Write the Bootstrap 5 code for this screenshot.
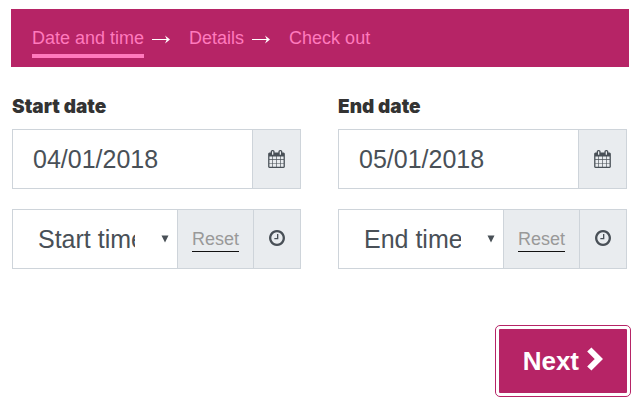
<!DOCTYPE html>
<html lang="en">
<head>
<meta charset="utf-8">
<meta name="viewport" content="width=device-width, initial-scale=1">
<title>Date and time</title>
<link href="https://cdn.jsdelivr.net/npm/bootstrap@5.3.0/dist/css/bootstrap.min.css" rel="stylesheet">
<style>
:root { --brand: #b62466; --brand-light: #ff7abd; --line: #ced4da; --ink: #495057; }
body { font-family: "Liberation Sans", Arial, sans-serif; font-size: 18px; background: #fff; }
.page { padding: 9px 13px 8px 11px; }
.steps { background: var(--brand); padding: 14px 21px 9px; }
.step-link { color: var(--brand-light); line-height: 29px; padding-top: 1px; padding-bottom: 1px; border-bottom: 4px solid transparent; }
.step-link:hover { color: #fff; }
.step-link.active { border-bottom-color: var(--brand-light); }
.step-arrow { color: #fff; margin: 12px 19px 0 8px; }
.booking { padding: 27px 2px 0 1px; }
.date-columns { --bs-gutter-x: 37px; }
.field-label { font-family: Inter, sans-serif; font-weight: 900; font-size: 19px; line-height: 26px; color: #333; margin-bottom: 9px; }
.field { height: 60px; }
.field + .field { margin-top: 20px; }
.field .form-control, .field .form-select, .field .input-group-text { border-color: var(--line); border-radius: 0; color: var(--ink); }
.field .form-control { font-size: 25px; padding: 2px 20px 0; }
.field .form-select { font-size: 25px; padding: 2px 42px 0 25px; background-image: url("data:image/svg+xml,%3Csvg xmlns='http://www.w3.org/2000/svg' viewBox='0 0 8 8'%3E%3Cpath fill='%23495057' d='M.5 .5h7L4 7.5z'/%3E%3C/svg%3E"); background-size: 8px 8px; background-position: right 8px center; }
.field .input-group-text { background: #e9ecef; padding: 0 14px; font-size: 18px; }
.field .icon-cell { width: 49px; padding: 0; justify-content: center; }
.field .time-cell { width: 48px; padding-bottom: 2px; }
.reset-btn { color: #999; background: none; border: 0; border-bottom: 1px solid #111; padding: 0; line-height: 24px; }
.next-btn { --bs-btn-color: #fff; --bs-btn-bg: var(--brand); --bs-btn-hover-color: #fff; --bs-btn-hover-bg: #9d1c56; --bs-btn-border-width: 0; font-size: 26px; height: 64px; padding: 0 24px; border-radius: 1px; margin-top: 60px; outline: 1px solid var(--brand); outline-offset: 3px; }
.next-btn svg { margin-bottom: 4px; }
</style>
<script src="https://cdn.jsdelivr.net/npm/bootstrap@5.3.0/dist/js/bootstrap.bundle.min.js" defer></script>
</head>
<body>
<svg class="d-none" aria-hidden="true">
  <symbol id="arrow" viewBox="0 0 18 9"><path d="M0 4h16v1H0zM13 .5l5 4-5 4 1.800-4z"/></symbol>
  <symbol id="calendar" viewBox="0 0 1664 1792"><path d="M128 1664h288v-288h-288v288zm352 0h320v-288h-320v288zm-352-352h288v-320h-288v320zm352 0h320v-320h-320v320zm-352-384h288v-288h-288v288zm736 736h320v-288h-320v288zm-384-736h320v-288h-320v288zm768 736h288v-288h-288v288zm-384-352h320v-320h-320v320zm-352-864v-288q0-13-9.5-22.5t-22.5-9.5h-64q-13 0-22.5 9.5t-9.5 22.5v288q0 13 9.5 22.5t22.5 9.5h64q13 0 22.5-9.5t9.5-22.5zm736 864h288v-320h-288v320zm-384-384h320v-288h-320v288zm384 0h288v-288h-288v288zm32-480v-288q0-13-9.5-22.5t-22.5-9.5h-64q-13 0-22.5 9.5t-9.5 22.5v288q0 13 9.5 22.5t22.5 9.5h64q13 0 22.5-9.5t9.5-22.5zm384-64v1280q0 52-38 90t-90 38h-1408q-52 0-90-38t-38-90v-1280q0-52 38-90t90-38h128v-96q0-66 47-113t113-47h64q66 0 113 47t47 113v96h384v-96q0-66 47-113t113-47h64q66 0 113 47t47 113v96h128q52 0 90 38t38 90z"/></symbol>
  <symbol id="clock" viewBox="0 128 1536 1536"><path d="M896 544v448q0 14-9 23t-23 9h-320q-14 0-23-9t-9-23v-64q0-14 9-23t23-9h224v-352q0-14 9-23t23-9h64q14 0 23 9t9 23zm416 352q0-148-73-273t-198-198-273-73-273 73-198 198-73 273 73 273 198 198 273 73 273-73 198-198 73-273zm224 0q0 209-103 385.5t-279.5 279.5-385.5 103-385.5-103-279.5-279.5-103-385.5 103-385.5 279.5-279.5 385.5-103 385.5 103 279.5 279.5 103 385.5z"/></symbol>
</svg>
<div class="page">
  <nav class="steps d-flex align-items-start" aria-label="Booking steps">
    <a class="step-link active text-decoration-none" href="#" aria-current="step">Date and time</a>
    <svg class="step-arrow" width="18" height="9" fill="currentColor" aria-hidden="true"><use href="#arrow"/></svg>
    <a class="step-link text-decoration-none" href="#">Details</a>
    <svg class="step-arrow" width="18" height="9" fill="currentColor" aria-hidden="true"><use href="#arrow"/></svg>
    <a class="step-link text-decoration-none" href="#">Check out</a>
  </nav>
  <form class="booking">
    <div class="row date-columns">
      <div class="col-6">
        <label class="field-label d-block" for="start-date">Start date</label>
        <div class="input-group field">
          <input class="form-control" id="start-date" type="text" value="04/01/2018">
          <span class="input-group-text icon-cell"><svg width="17" height="18" fill="currentColor" aria-hidden="true"><use href="#calendar"/></svg></span>
        </div>
        <div class="input-group field flex-nowrap">
          <select class="form-select" id="start-time" aria-label="Start time"><option>Start time</option></select>
          <span class="input-group-text"><button class="reset-btn" type="reset">Reset</button></span>
          <span class="input-group-text icon-cell time-cell"><svg width="16" height="16" fill="currentColor" aria-hidden="true"><use href="#clock"/></svg></span>
        </div>
      </div>
      <div class="col-6">
        <label class="field-label d-block" for="end-date">End date</label>
        <div class="input-group field">
          <input class="form-control" id="end-date" type="text" value="05/01/2018">
          <span class="input-group-text icon-cell"><svg width="17" height="18" fill="currentColor" aria-hidden="true"><use href="#calendar"/></svg></span>
        </div>
        <div class="input-group field flex-nowrap">
          <select class="form-select" id="end-time" aria-label="End time"><option>End time</option></select>
          <span class="input-group-text"><button class="reset-btn" type="reset">Reset</button></span>
          <span class="input-group-text icon-cell time-cell"><svg width="16" height="16" fill="currentColor" aria-hidden="true"><use href="#clock"/></svg></span>
        </div>
      </div>
    </div>
    <div class="d-flex justify-content-end">
      <button class="btn next-btn fw-bold d-flex align-items-center gap-2" type="submit">Next
        <svg width="16" height="24" viewBox="0 0 16 24" fill="none" stroke="currentColor" stroke-width="6" aria-hidden="true"><path d="M2.300 2.500 11.800 12l-9.500 9.500"/></svg>
      </button>
    </div>
  </form>
</div>
</body>
</html>
